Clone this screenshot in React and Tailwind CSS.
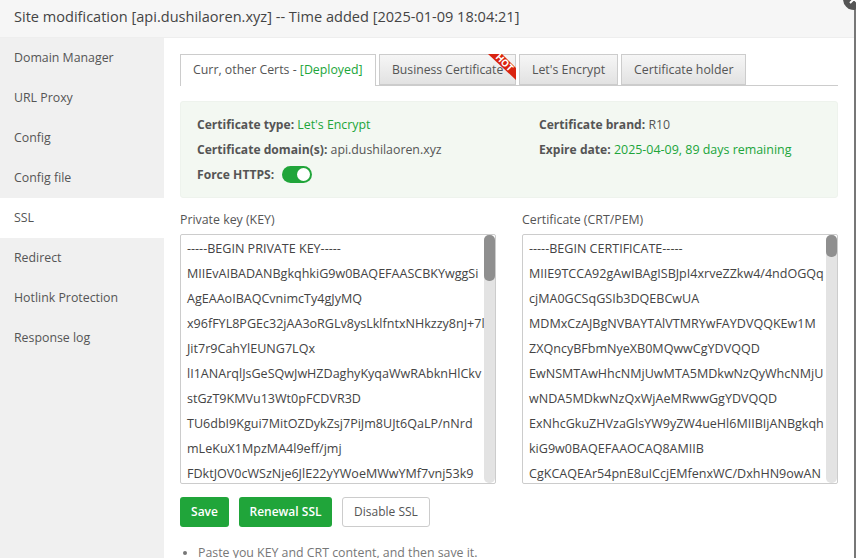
import { useState } from "react";

const navItems = [
  "Domain Manager",
  "URL Proxy",
  "Config",
  "Config file",
  "SSL",
  "Redirect",
  "Hotlink Protection",
  "Response log",
];

const keyLines = [
  "-----BEGIN PRIVATE KEY-----",
  "MIIEvAIBADANBgkqhkiG9w0BAQEFAASCBKYwggSi",
  "AgEAAoIBAQCvnimcTy4gJyMQ",
  "x96fFYL8PGEc32jAA3oRGLv8ysLklfntxNHkzzy8nJ+7l",
  "Jit7r9CahYlEUNG7LQx",
  "lI1ANArqlJsGeSQwJwHZDaghyKyqaWwRAbknHlCkv",
  "stGzT9KMVu13Wt0pFCDVR3D",
  "TU6dbI9Kgui7MitOZDykZsj7PiJm8UJt6QaLP/nNrd",
  "mLeKuX1MpzMA4l9eff/jmj",
  "FDktJOV0cWSzNje6JlE22yYWoeMWwYMf7vnj53k9",
];

const certLines = [
  "-----BEGIN CERTIFICATE-----",
  "MIIE9TCCA92gAwIBAgISBJpI4xrveZZkw4/4ndOGQq",
  "cjMA0GCSqGSIb3DQEBCwUA",
  "MDMxCzAJBgNVBAYTAlVTMRYwFAYDVQQKEw1M",
  "ZXQncyBFbmNyeXB0MQwwCgYDVQQD",
  "EwNSMTAwHhcNMjUwMTA5MDkwNzQyWhcNMjU",
  "wNDA5MDkwNzQxWjAeMRwwGgYDVQQD",
  "ExNhcGkuZHVzaGlsYW9yZW4ueHl6MIIBIjANBgkqh",
  "kiG9w0BAQEFAAOCAQ8AMIIB",
  "CgKCAQEAr54pnE8uICcjEMfenxWC/DxhHN9owAN",
];

const CertBox = ({ label, lines, thumbClass }) => (
  <div className="w-[316px]">
    <div className="h-[26px] leading-[24px] text-[#555]">{label}</div>
    <div className="relative h-[250px] overflow-hidden rounded-[2px] border border-[#ccc] pl-[6px] pt-[1px] text-[12.55px] leading-[25px] whitespace-nowrap text-[#444]">
      {lines.map((line) => (
        <div key={line}>{line}</div>
      ))}
      <div className="absolute top-0 right-0 bottom-0 w-[11px] rounded-[5px] bg-[#e3e3e3]">
        <div className={`w-[11px] rounded-[5px] bg-[#8f8f8f] ${thumbClass}`} />
      </div>
    </div>
  </div>
);

const App = () => {
  const [active, setActive] = useState("SSL");

  return (
    <div className="relative h-[558px] w-[856px] overflow-hidden bg-white font-['Open_Sans','Noto_Sans',sans-serif] text-[12.35px] text-[#555]">
      <div className="h-full w-[854px] bg-white">
        <div className="h-[38px] border-b border-[#eee] bg-[#f6f6f6] pl-[14px] text-[14.55px] leading-[33px] text-[#444]">
          Site modification [api.dushilaoren.xyz] -- Time added [2025-01-09 18:04:21]
        </div>

        <div className="flex h-[520px]">
          <div className="w-[164px] bg-[#f0f0f0]">
            {navItems.map((item) => (
              <div
                key={item}
                onClick={() => setActive(item)}
                className={`h-[40px] pl-[14px] leading-[39px] text-[#555] ${active === item ? "bg-white" : ""}`}
              >
                {item}
              </div>
            ))}
          </div>

          <div className="flex-1 pt-[16px] pl-[16px]">
            <div className="flex h-[32px] w-[658px] gap-[3px] border-b border-[#ccc]">
              <div className="h-[32px] w-[196px] border border-b-0 border-[#ccc] bg-white pl-[12px] leading-[30px]">
                Curr, other Certs - <span className="text-[#20a53a]">[Deployed]</span>
              </div>
              <div className="relative h-[31px] w-[137px] border border-[#ccc] bg-gradient-to-b from-[#f6f6f6] to-[#e2e2e2] pl-[12px] text-[12.2px] leading-[29px]">
                Business Certificate
                <svg className="absolute -top-px -right-px" width="28" height="27" viewBox="0 0 28 27">
                  <polygon points="0,0 14,0 28,14 28,26" fill="#d9230f" />
                  <text x="16.5" y="11.8" transform="rotate(45 16.5 8.5)" fill="#fff" fontSize="9.5" fontWeight="700" textAnchor="middle" fontFamily="Open Sans">
                    HOT
                  </text>
                </svg>
              </div>
              <div className="h-[31px] w-[99px] border border-[#ccc] bg-gradient-to-b from-[#f6f6f6] to-[#e2e2e2] pl-[12px] leading-[29px]">
                Let's Encrypt
              </div>
              <div className="h-[31px] w-[125px] border border-[#ccc] bg-gradient-to-b from-[#f6f6f6] to-[#e2e2e2] pl-[12px] leading-[29px]">
                Certificate holder
              </div>
            </div>

            <div className="mt-[15px] flex h-[97px] w-[658px] rounded-[3px] border border-[#eef3ed] bg-[#f3f8f2] pt-[10px] pl-[16px] leading-[25px]">
              <div className="w-[342px]">
                <div>
                  <b className="text-[12.1px]">Certificate type:</b> <span className="text-[#20a53a]">Let's Encrypt</span>
                </div>
                <div>
                  <b className="text-[12.1px]">Certificate domain(s):</b> api.dushilaoren.xyz
                </div>
                <div className="flex items-center gap-[8px]">
                  <b className="text-[12.1px]">Force HTTPS:</b>
                  <div className="flex h-[17px] w-[30px] items-center justify-end rounded-full bg-[#20a53a] pr-[2px]">
                    <div className="h-[13px] w-[13px] rounded-full bg-white" />
                  </div>
                </div>
              </div>
              <div>
                <div>
                  <b className="text-[12.1px]">Certificate brand:</b> R10
                </div>
                <div>
                  <b className="text-[12.1px]">Expire date:</b>{" "}
                  <span className="text-[12.45px] text-[#20a53a]">2025-04-09, 89 days remaining</span>
                </div>
              </div>
            </div>

            <div className="mt-[10px] flex w-[658px] justify-between">
              <CertBox label="Private key (KEY)" lines={keyLines} thumbClass="h-[46px]" />
              <CertBox label="Certificate (CRT/PEM)" lines={certLines} thumbClass="h-[22px]" />
            </div>

            <div className="mt-[13px] flex gap-[10px] text-[12px]">
              <button className="h-[30px] w-[49px] rounded-[3px] bg-[#20a53a] font-semibold text-white">Save</button>
              <button className="h-[30px] w-[93px] rounded-[3px] bg-[#20a53a] font-semibold text-white">Renewal SSL</button>
              <button className="h-[30px] w-[88px] rounded-[3px] border border-[#ccc] bg-white text-[#555]">Disable SSL</button>
            </div>

            <ul className="mt-[16px] list-disc pl-[18px] leading-[20px] text-[#777]">
              <li>Paste you KEY and CRT content, and then save it.</li>
            </ul>
          </div>
        </div>
      </div>

      <div className="absolute top-[10px] right-0 bottom-0 w-[2px] bg-[#777]" />
      <div className="absolute -top-[12px] -right-[9px] flex h-[22px] w-[22px] items-center justify-center rounded-full bg-[#555] text-white">
        <svg width="12" height="12" viewBox="0 0 12 12" stroke="currentColor" strokeWidth="2">
          <path d="M2 2l8 8M10 2l-8 8" />
        </svg>
      </div>
    </div>
  );
};

export default App;
